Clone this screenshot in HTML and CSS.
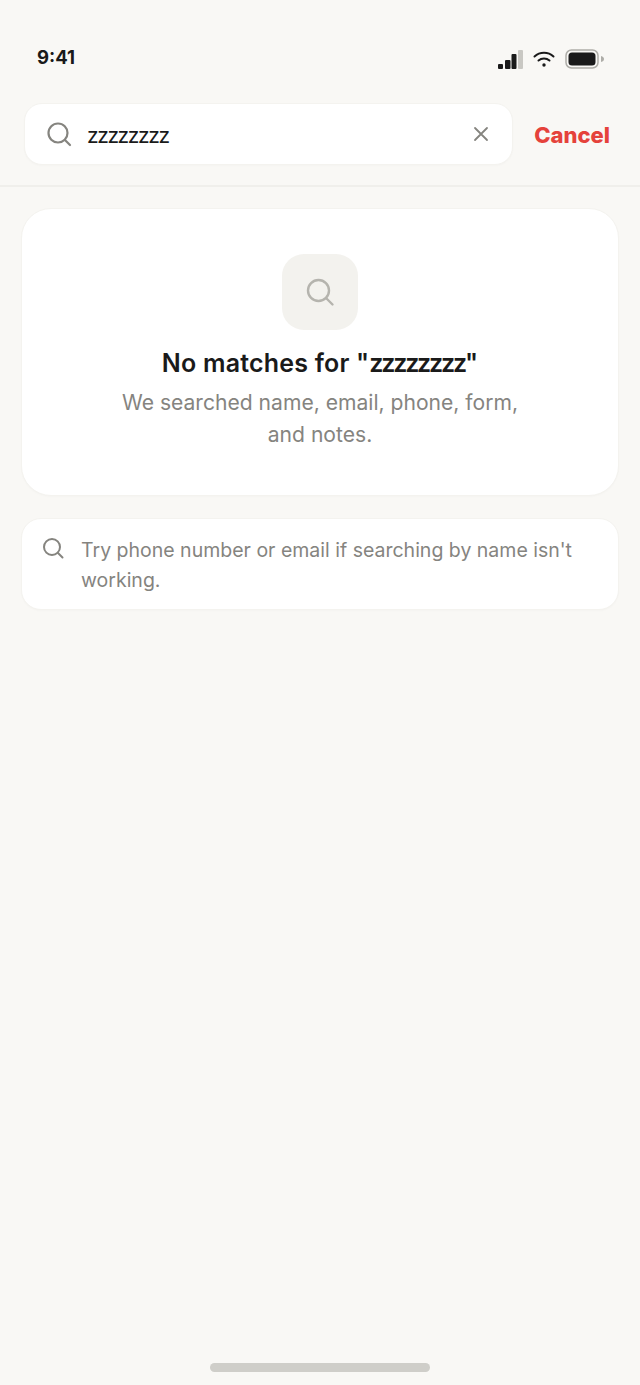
FILE: index.html
```html
<!DOCTYPE html>
<html lang="en">
<head>
    <meta name="viewport" content="width=device-width, initial-scale=1">
    <title>Search</title>
    <link rel="stylesheet" href="styles.css">
</head>
<body>
    <div class="status-bar">
        <span class="time">9:41</span>
        <div class="status-icons">
            <svg width="25" height="20" viewBox="0 0 25 20">
                <rect x="0" y="15" width="5" height="5" rx="1" fill="#1a1a1a"/>
                <rect x="7" y="11" width="5.500" height="9" rx="1" fill="#1a1a1a"/>
                <rect x="13.500" y="5" width="5" height="15" rx="1" fill="#1a1a1a"/>
                <rect x="20" y="1" width="5" height="19" rx="1" fill="#c9c8c3"/>
            </svg>
            <svg width="22" height="18" viewBox="0 0 22 18" fill="none" stroke="#1a1a1a" stroke-width="2" stroke-linecap="round">
                <path d="M1.500 6.500C6.800 1.500 15.200 1.500 20.500 6.500"/>
                <path d="M5.500 10.500C8.600 7.700 13.400 7.700 16.500 10.500"/>
                <circle cx="11" cy="15" r="1.700" fill="#1a1a1a" stroke="none"/>
            </svg>
            <svg width="40" height="20" viewBox="0 0 40 20">
                <rect x="1" y="1" width="32" height="18" rx="5.500" fill="none" stroke="#aeada8" stroke-width="1.500"/>
                <rect x="3.500" y="3.500" width="27" height="13" rx="3.500" fill="#1a1a1a"/>
                <path d="M36 7c2 .5 3 1.500 3 3s-1 2.500-3 3z" fill="#aeada8"/>
            </svg>
        </div>
    </div>

    <header class="search-header">
        <div class="search-box">
            <svg class="search-box-icon" width="26" height="26" viewBox="0 0 26 26" fill="none" stroke="#85847f" stroke-width="2.200" stroke-linecap="round">
                <circle cx="12" cy="12" r="9.500"/>
                <path d="M19 19l5 5"/>
            </svg>
            <span class="search-text">zzzzzzzz</span>
            <svg class="clear-icon" width="16" height="16" viewBox="0 0 16 16" fill="none" stroke="#85847f" stroke-width="1.800" stroke-linecap="round">
                <path d="M2 2l12 12M14 2L2 14"/>
            </svg>
        </div>
        <span class="cancel">Cancel</span>
    </header>

    <main class="content">
        <section class="card empty-card">
            <div class="empty-icon">
                <svg width="30" height="30" viewBox="0 0 30 30" fill="none" stroke="#b5b4ae" stroke-width="2.400" stroke-linecap="round">
                    <circle cx="13.500" cy="13.500" r="10.500"/>
                    <path d="M21.500 21.500l6 6"/>
                </svg>
            </div>
            <h1>No matches for "<span class="query">zzzzzzzz</span>"</h1>
            <p>We searched name, email, phone, form,<br>and notes.</p>
        </section>
        <section class="card tip-card">
            <svg width="22" height="22" viewBox="0 0 22 22" fill="none" stroke="#85847f" stroke-width="2" stroke-linecap="round">
                <circle cx="10" cy="10" r="8"/>
                <path d="M16 16l4.500 4.500"/>
            </svg>
            <p>Try phone number or email if searching by name isn't working.</p>
        </section>
    </main>

    <div class="home-indicator"></div>
</body>
</html>
```

FILE: styles.css
```css
html, body {
    height: 100%;
}

body {
    margin: 0;
    background-color: #f9f8f5;
    color: #1a1a1a;
    font-family: Inter, 'Noto Sans', sans-serif;
    display: flex;
    flex-direction: column;
    box-sizing: border-box;
}

.status-bar {
    display: flex;
    justify-content: space-between;
    align-items: center;
    height: 20px;
    margin-top: 47px;
    padding: 0 35px 0 37px;
}

.time {
    font-size: 18.500px;
    font-weight: 700;
}

.status-icons {
    display: flex;
    align-items: center;
    gap: 10px;
    margin-top: 4px;
    margin-left: -1px;
}

.search-header {
    display: flex;
    align-items: center;
    height: 62px;
    margin-top: 36px;
    padding: 0 30px 20px 24px;
    border-bottom: 2px solid #f0efeb;
}

.search-box {
    flex: 1;
    height: 62px;
    box-sizing: border-box;
    display: flex;
    align-items: center;
    padding: 0 23px 0 21px;
    background-color: #fff;
    border: 1px solid #f4f3ef;
    border-radius: 18px;
    box-shadow: 0 1px 2px rgba(0, 0, 0, 0.02);
}

.search-box-icon {
    flex-shrink: 0;
}

.search-text {
    flex: 1;
    margin-left: 15px;
    font-size: 21px;
    letter-spacing: -1.400px;
    padding-top: 3px;
}

.cancel {
    margin-left: 21px;
    padding-top: 1px;
    color: #e5423b;
    font-size: 22px;
    font-weight: 800;
}

.content {
    display: flex;
    flex-direction: column;
    gap: 22px;
    padding: 21px 21px 0;
}

.card {
    background-color: #fff;
    border: 1px solid #f4f3ef;
    box-sizing: border-box;
    box-shadow: 0 1px 2px rgba(0, 0, 0, 0.02);
}

.empty-card {
    height: 288px;
    border-radius: 30px;
    padding-top: 45px;
    display: flex;
    flex-direction: column;
    align-items: center;
    text-align: center;
}

.empty-icon {
    width: 76px;
    height: 76px;
    border-radius: 22px;
    background-color: #f3f2ee;
    display: flex;
    align-items: center;
    justify-content: center;
}

.empty-card h1 {
    margin: 18px 0 0;
    font-size: 25px;
    line-height: 30px;
    font-weight: 600;
    letter-spacing: 0.200px;
}

.query {
    letter-spacing: -2.200px;
}

.empty-card p {
    margin: 9px 0 0;
    font-size: 21.100px;
    line-height: 32px;
    color: #85847f;
}

.tip-card {
    height: 92px;
    border-radius: 20px;
    padding: 16px 20px 0 20px;
    display: flex;
    gap: 17px;
}

.tip-card svg {
    flex-shrink: 0;
    margin-top: 2px;
}

.tip-card p {
    margin: 0;
    font-size: 19.500px;
    line-height: 30px;
    color: #85847f;
}

.home-indicator {
    position: fixed;
    left: 210px;
    bottom: 13px;
    width: 220px;
    height: 9px;
    border-radius: 5px;
    background-color: #cfcec9;
}
```
